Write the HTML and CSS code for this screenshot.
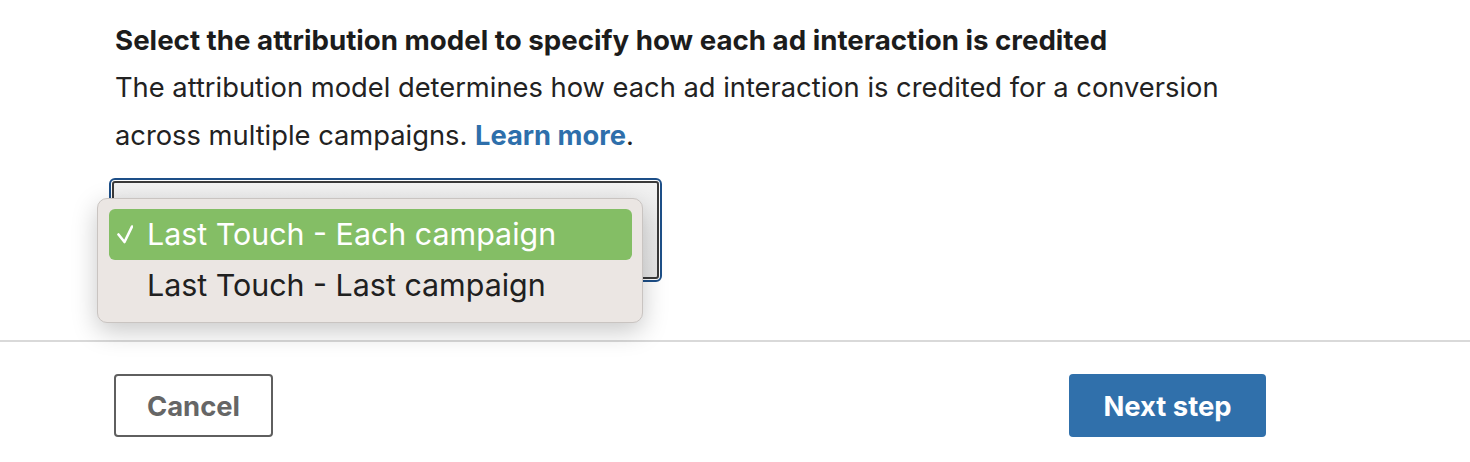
FILE: index.html
```html
<!DOCTYPE html>
<html>
<head>
<link rel="stylesheet" href="styles.css">
</head>
<body>
<div class="step">
    <h2 class="step-title">Select the attribution model to specify how each ad interaction is credited</h2>
    <p class="step-text">The attribution model determines how each ad interaction is credited for a conversion across multiple campaigns. <a href="#" class="learn">Learn more</a>.</p>

    <div class="picker">
        <div class="select-box"></div>
        <ul class="menu">
            <li class="option selected">
                <svg class="tick" viewBox="0 0 16 19" width="16" height="19"><path d="M1.5 9.5 L7.5 17 L15 1.5" fill="none" stroke="#ffffff" stroke-width="2.6" stroke-linecap="round" stroke-linejoin="round"/></svg>Last Touch - Each campaign
            </li>
            <li class="option">Last Touch - Last campaign</li>
        </ul>
    </div>
</div>

<div class="footer">
    <button class="btn cancel">Cancel</button>
    <button class="btn next">Next step</button>
</div>
</body>
</html>
```

FILE: styles.css
```css
body
{
    margin: 0;
    background: #ffffff;
    font-family: Inter, "Liberation Sans", sans-serif;
    color: #1f1f1f;
}

.step
{
    padding: 24px 0 0 115px;
    width: 1152px;
}

.step-title
{
    margin: 0;
    font-size: 27.7px;
    line-height: 32px;
    font-weight: 700;
    color: #1c1c1c;
    white-space: nowrap;
}

.step-text
{
    margin: 8px 0 0 0;
    font-size: 27.3px;
    line-height: 48px;
    color: #222222;
}

.learn
{
    color: #2e6fab;
    font-weight: 700;
    text-decoration: none;
}

.picker
{
    position: relative;
    margin: 21px 0 0 -3px;
    width: 547px;
}

.select-box
{
    height: 94px;
    border: 2px solid #3a3a3a;
    border-radius: 3px;
    background: linear-gradient(#f2f2f2, #e6e6e6);
    outline: 2px solid #1d4f88;
    outline-offset: 1px;
}

.menu
{
    position: absolute;
    left: -15px;
    top: 17px;
    width: 523px;
    margin: 0;
    padding: 10px 10px 11px 11px;
    list-style: none;
    background: #ebe6e3;
    border: 1px solid #c9c4c1;
    border-radius: 10px;
    box-shadow: 0 8px 26px rgba(0, 0, 0, 0.22);
}

.option
{
    height: 51px;
    line-height: 51px;
    padding-left: 38px;
    font-size: 30.4px;
    color: #202020;
    border-radius: 6px;
    position: relative;
}

.option.selected
{
    background: #84be65;
    color: #ffffff;
}

.tick
{
    position: absolute;
    left: 8px;
    top: 16px;
}

.footer
{
    margin-top: 61px;
    border-top: 2px solid #d9d9d9;
    padding: 32px 0 0 114px;
    display: flex;
}

.btn
{
    height: 63px;
    font-family: Inter, "Liberation Sans", sans-serif;
    font-size: 27.4px;
    font-weight: 700;
    border-radius: 4px;
    cursor: pointer;
}

.cancel
{
    width: 159px;
    background: #ffffff;
    color: #666666;
    border: 2px solid #5f5f5f;
}

.next
{
    width: 197px;
    margin-left: 796px;
    background: #3070ab;
    color: #ffffff;
    border: none;
}
```
